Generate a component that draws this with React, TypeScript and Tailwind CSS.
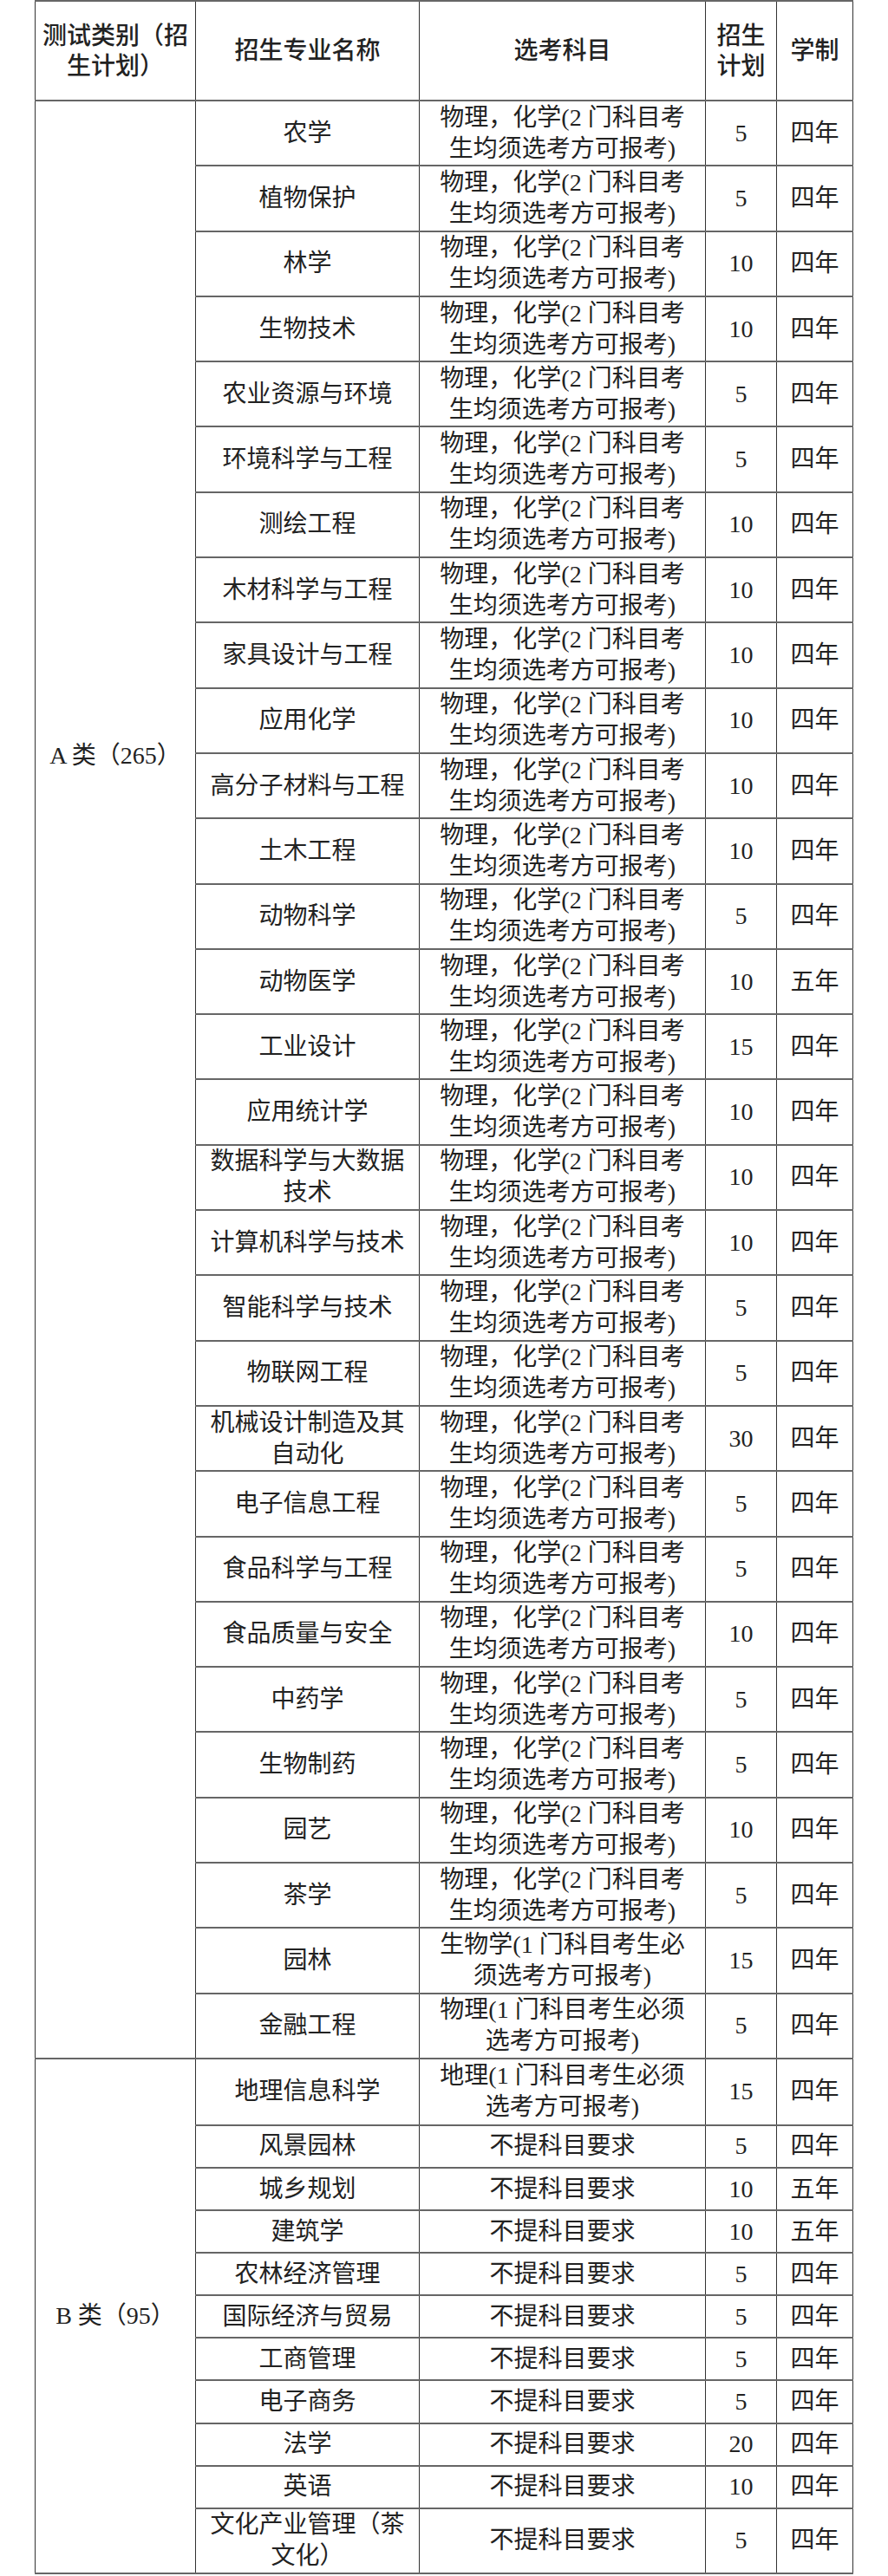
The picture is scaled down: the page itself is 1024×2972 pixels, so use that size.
import React from "react";

interface Row {
  name: React.ReactNode;
  subj: React.ReactNode;
  n: number;
  years: string;
  h: string;
}

const chem = (
  <>
    物理，化学(2 门科目考
    <br />
    生均须选考方可报考)
  </>
);
const none = "不提科目要求";
const A = "h-[75.3px]";

const aRows: Row[] = [
  { name: "农学", subj: chem, n: 5, years: "四年", h: A },
  { name: "植物保护", subj: chem, n: 5, years: "四年", h: A },
  { name: "林学", subj: chem, n: 10, years: "四年", h: A },
  { name: "生物技术", subj: chem, n: 10, years: "四年", h: A },
  { name: "农业资源与环境", subj: chem, n: 5, years: "四年", h: A },
  { name: "环境科学与工程", subj: chem, n: 5, years: "四年", h: A },
  { name: "测绘工程", subj: chem, n: 10, years: "四年", h: A },
  { name: "木材科学与工程", subj: chem, n: 10, years: "四年", h: A },
  { name: "家具设计与工程", subj: chem, n: 10, years: "四年", h: A },
  { name: "应用化学", subj: chem, n: 10, years: "四年", h: A },
  { name: "高分子材料与工程", subj: chem, n: 10, years: "四年", h: A },
  { name: "土木工程", subj: chem, n: 10, years: "四年", h: A },
  { name: "动物科学", subj: chem, n: 5, years: "四年", h: A },
  { name: "动物医学", subj: chem, n: 10, years: "五年", h: A },
  { name: "工业设计", subj: chem, n: 15, years: "四年", h: A },
  { name: "应用统计学", subj: chem, n: 10, years: "四年", h: A },
  { name: <>数据科学与大数据<br />技术</>, subj: chem, n: 10, years: "四年", h: A },
  { name: "计算机科学与技术", subj: chem, n: 10, years: "四年", h: A },
  { name: "智能科学与技术", subj: chem, n: 5, years: "四年", h: A },
  { name: "物联网工程", subj: chem, n: 5, years: "四年", h: A },
  { name: <>机械设计制造及其<br />自动化</>, subj: chem, n: 30, years: "四年", h: A },
  { name: "电子信息工程", subj: chem, n: 5, years: "四年", h: A },
  { name: "食品科学与工程", subj: chem, n: 5, years: "四年", h: A },
  { name: "食品质量与安全", subj: chem, n: 10, years: "四年", h: A },
  { name: "中药学", subj: chem, n: 5, years: "四年", h: A },
  { name: "生物制药", subj: chem, n: 5, years: "四年", h: A },
  { name: "园艺", subj: chem, n: 10, years: "四年", h: A },
  { name: "茶学", subj: chem, n: 5, years: "四年", h: A },
  { name: "园林", subj: <>生物学(1 门科目考生必<br />须选考方可报考)</>, n: 15, years: "四年", h: A },
  { name: "金融工程", subj: <>物理(1 门科目考生必须<br />选考方可报考)</>, n: 5, years: "四年", h: A },
];

const S = "h-[49.1px]";

const bRows: Row[] = [
  { name: "地理信息科学", subj: <>地理(1 门科目考生必须<br />选考方可报考)</>, n: 15, years: "四年", h: "h-[77px]" },
  { name: "风景园林", subj: none, n: 5, years: "四年", h: S },
  { name: "城乡规划", subj: none, n: 10, years: "五年", h: S },
  { name: "建筑学", subj: none, n: 10, years: "五年", h: S },
  { name: "农林经济管理", subj: none, n: 5, years: "四年", h: S },
  { name: "国际经济与贸易", subj: none, n: 5, years: "四年", h: S },
  { name: "工商管理", subj: none, n: 5, years: "四年", h: S },
  { name: "电子商务", subj: none, n: 5, years: "四年", h: S },
  { name: "法学", subj: none, n: 20, years: "四年", h: S },
  { name: "英语", subj: none, n: 10, years: "四年", h: S },
  { name: <>文化产业管理（茶<br />文化）</>, subj: none, n: 5, years: "四年", h: "h-[75px]" },
];

const cell =
  "border-x-[1.5px] border-x-[#333] border-y-2 border-y-[#666] p-0 text-center align-middle whitespace-nowrap";

function Cells({ row }: { row: Row }) {
  return (
    <>
      <td className={cell}>{row.name}</td>
      <td className={cell}>{row.subj}</td>
      <td className={cell}>{row.n}</td>
      <td className={cell}>{row.years}</td>
    </>
  );
}

export default function App() {
  return (
    <div className="bg-white min-h-[2972px] font-['Liberation_Serif','Noto_Sans_CJK_SC',serif] text-[28px] leading-[36px] text-[#222]">
      <table className="ml-[40px] w-[943px] table-fixed border-collapse">
        <colgroup>
          <col className="w-[185px]" />
          <col className="w-[258px]" />
          <col className="w-[330px]" />
          <col className="w-[82px]" />
          <col className="w-[88px]" />
        </colgroup>
        <thead>
          <tr className="h-[115px] leading-[35px]">
            <th className={cell + " font-medium"}>
              测试类别（招
              <br />
              生计划）
            </th>
            <th className={cell + " font-medium"}>招生专业名称</th>
            <th className={cell + " font-medium"}>选考科目</th>
            <th className={cell + " font-medium"}>
              招生
              <br />
              计划
            </th>
            <th className={cell + " font-medium"}>学制</th>
          </tr>
        </thead>
        <tbody>
          {aRows.map((row, i) => (
            <tr key={"a" + i} className={row.h}>
              {i === 0 && (
                <td rowSpan={aRows.length} className={cell + " !align-top pt-[737px]"}>
                  A 类（265）
                </td>
              )}
              <Cells row={row} />
            </tr>
          ))}
          {bRows.map((row, i) => (
            <tr key={"b" + i} className={row.h}>
              {i === 0 && (
                <td rowSpan={bRows.length} className={cell}>
                  B 类（95）
                </td>
              )}
              <Cells row={row} />
            </tr>
          ))}
        </tbody>
      </table>
    </div>
  );
}
